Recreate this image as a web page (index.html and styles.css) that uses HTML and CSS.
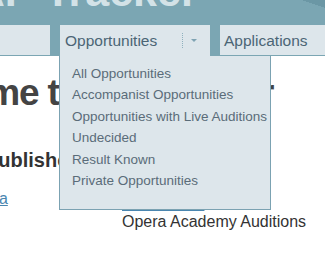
FILE: index.html
```html
<!DOCTYPE html>
<html lang="en">

<head>
    <meta charset="UTF-8">
    <meta name="viewport" content="width=device-width, initial-scale=1.0">
    <title>YAP Tracker</title>
    <link rel="stylesheet" href="styles.css">
</head>

<body>
    <div class="masthead">
        <div class="site-title">YAP Tracker</div>
    </div>

    <ul class="nav">
        <li class="tab">Home</li>
        <li class="tab tab-open">
            <span class="tab-label">Opportunities</span>
            <span class="tab-split"><span class="caret"></span></span>
            <ul class="dropdown">
                <li>All Opportunities</li>
                <li>Accompanist Opportunities</li>
                <li>Opportunities with Live Auditions</li>
                <li>Undecided</li>
                <li>Result Known</li>
                <li>Private Opportunities</li>
            </ul>
        </li>
        <li class="tab">Applications</li>
    </ul>

    <div class="main">
        <h1>Welcome to the Tracker</h1>
        <h2>Recently Published</h2>
        <div class="listing">
            <div class="cell"><a href="#">Santa Fe Opera</a></div>
            <div class="cell cell-offset">
                <a href="#">Lake Tahoe</a>
                <div>Opera Academy Auditions</div>
            </div>
        </div>
    </div>
</body>

</html>
```

FILE: styles.css
```css
body {
    margin: 0;
    background: #fff;
    font-family: "Liberation Sans", Arial, sans-serif;
    color: #333;
    overflow: hidden;
}

/* Header band */
.masthead {
    height: 25px;
    overflow: hidden;
    background: linear-gradient(to bottom left, #6b97a5 50%, transparent 50%) right top / 23px 8px no-repeat, #7ba6b3;
}

.site-title {
    margin: -30px 0 0 -51px;
    font-size: 43px;
    line-height: 43px;
    font-weight: bold;
    color: #d3e2e7;
    white-space: nowrap;
}

/* Tabs */
.nav {
    display: flex;
    gap: 10px;
    margin: 0 0 0 -70px;
    padding: 0 0 1px;
    list-style: none;
    height: 30px;
    background: #7ba6b3;
}

.tab {
    display: flex;
    align-items: center;
    box-sizing: border-box;
    height: 30px;
    padding: 2px 5px 0 4px;
    background: #dde6eb;
    color: #4b6575;
    font-size: 15.5px;
    white-space: nowrap;
}

.tab:first-child {
    width: 120px;
}

.tab-open {
    position: relative;
    width: 150px;
    height: 31px;
    padding: 0 0 0 5px;
}

.tab-split {
    display: flex;
    align-items: center;
    margin-left: auto;
    width: 28px;
    height: 15px;
    padding-left: 8px;
    box-sizing: border-box;
    border-left: 1px dotted #8fb1be;
}

.caret {
    width: 0;
    height: 0;
    border-left: 3px solid transparent;
    border-right: 3px solid transparent;
    border-top: 3px solid #7fa3b3;
}

.tab:last-child {
    flex: 1;
}

/* Menu */
.dropdown {
    position: absolute;
    top: 100%;
    left: -1px;
    z-index: 3;
    width: 198px;
    margin: 0;
    padding: 7px 0 18px 12px;
    list-style: none;
    background: #dde6eb;
    border: 1px solid #7ba2b2;
    border-top: none;
    font-size: 13.5px;
    line-height: 21.4px;
    color: #5a6c79;
}

/* Content */
.main {
    margin-left: -115px;
}

h1 {
    margin: 15px 0 0;
    font-size: 37px;
    line-height: 44.4px;
    letter-spacing: -1.2px;
    color: #444;
    white-space: nowrap;
}

h2 {
    margin: 32.6px 0 0 11px;
    font-size: 20px;
    line-height: 24px;
    color: #333;
    white-space: nowrap;
}

.listing {
    display: grid;
    grid-template-columns: 228px 1fr;
    margin-top: 17.5px;
    padding-left: 9px;
    font-size: 16px;
    line-height: 18px;
}

.cell a {
    color: #4a86b0;
}

.cell-offset {
    padding-top: 5px;
    white-space: nowrap;
}
```
